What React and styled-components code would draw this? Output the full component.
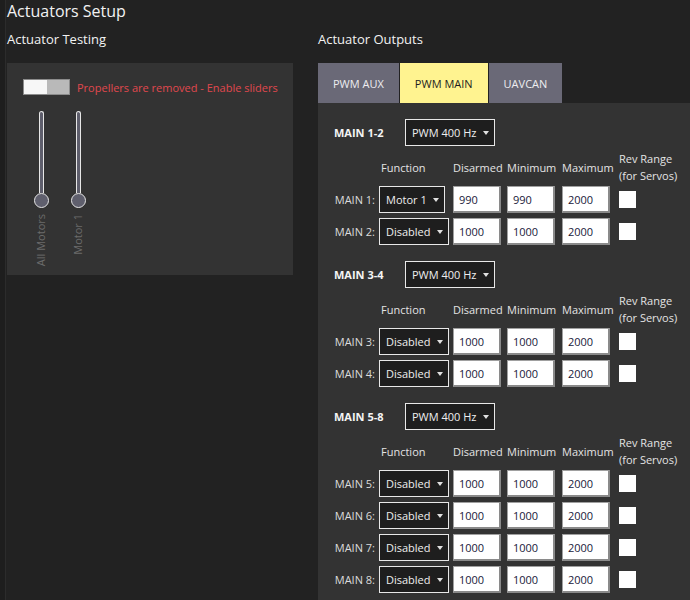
import styled, { createGlobalStyle } from "styled-components";

const GlobalStyle = createGlobalStyle`
  html, body {
    margin: 0;
    padding: 0;
    background: #222222;
    overflow: hidden;
  }
  body {
    font-family: "Open Sans", "Liberation Sans", sans-serif;
    font-size: 11px;
    color: #eeeeee;
  }
`;

const Root = styled.div`
  display: flex;
  width: 690px;
  height: 600px;
  background: #222222;
  overflow: hidden;
`;

const EdgeStrip = styled.div`
  width: 5px;
  flex: none;
  background: #1e1e1e;
  border-right: 1px solid #2c2c2c;
`;

const Main = styled.div`
  flex: 1;
  padding-left: 1px;
  display: flex;
  flex-direction: column;
`;

const Title = styled.h1`
  margin: 0;
  font-size: 16px;
  font-weight: 400;
  line-height: 22px;
  color: #f2f2f2;
`;

const Columns = styled.div`
  display: flex;
  gap: 25px;
  margin-top: 6px;
`;

const LeftCol = styled.div`
  width: 286px;
  flex: none;
`;

const RightCol = styled.div`
  flex: 1;
  display: flex;
  flex-direction: column;
`;

const SectionTitle = styled.h2`
  margin: 0;
  font-size: 13px;
  font-weight: 400;
  line-height: 22px;
  height: 35px;
  color: #f2f2f2;
`;

const TestPanel = styled.div`
  background: #333333;
  height: 212px;
  box-sizing: border-box;
  padding: 16px 16px 10px;
`;

const ToggleRow = styled.div`
  display: flex;
  align-items: center;
  gap: 7px;
  height: 16px;
`;

const Toggle = styled.div`
  width: 47px;
  height: 16px;
  flex: none;
  box-sizing: border-box;
  border: 1px solid #8c8c8c;
  display: flex;
`;

const ToggleHalf = styled.div`
  flex: 1;
  background: ${(p) => (p.$on ? "#f7f7f7" : "#b9b9b9")};
`;

const Warning = styled.span`
  color: #e0484e;
  font-size: 11px;
  white-space: nowrap;
`;

const Sliders = styled.div`
  display: flex;
  gap: 1px;
  margin-top: 16px;
`;

const SliderCol = styled.div`
  width: 36px;
  display: flex;
  flex-direction: column;
  align-items: center;
`;

const Track = styled.div`
  width: 5px;
  height: 82px;
  box-sizing: border-box;
  border: 1px solid #e6e6e6;
  border-bottom: none;
  border-radius: 3px 3px 0 0;
  background: #5e5e6c;
`;

const Knob = styled.div`
  width: 15px;
  height: 15px;
  box-sizing: border-box;
  border-radius: 50%;
  border: 1.5px solid #e6e6e6;
  background: #5f5f6d;
`;

const SliderLabel = styled.div`
  margin-top: 6px;
  writing-mode: vertical-rl;
  transform: rotate(180deg);
  color: #6b6b6b;
  font-size: 11px;
  line-height: 14px;
  text-align: right;
`;

const Tabs = styled.div`
  display: flex;
  gap: 1px;
  height: 40px;
`;

const Tab = styled.div`
  display: flex;
  align-items: center;
  padding: 0 15px;
  background: ${(p) => (p.$active ? "#fff390" : "#6a6977")};
  color: ${(p) => (p.$active ? "#1e1e1e" : "#ededf0")};
  font-size: 11px;
`;

const OutputsPanel = styled.div`
  background: #333333;
  flex: 1;
  padding: 16px 0 0 16px;
`;

const Group = styled.div`
  display: flex;
  flex-direction: column;
  margin-bottom: 16px;
`;

const GroupHead = styled.div`
  display: flex;
  align-items: center;
  height: 27px;
  margin-bottom: 4px;
`;

const GroupName = styled.div`
  width: 71px;
  font-weight: 700;
  color: #f4f4f4;
`;

const Select = styled.div`
  display: inline-flex;
  align-items: center;
  height: 27px;
  box-sizing: border-box;
  padding: 0 5px 0 6px;
  gap: 6px;
  background: #1e1e1e;
  border: 1px solid #e8e8e8;
  color: #eeeeee;
  white-space: nowrap;
  justify-self: start;
`;

const Caret = styled.span`
  width: 0;
  height: 0;
  border-left: 3.5px solid transparent;
  border-right: 3.5px solid transparent;
  border-top: 4px solid #e0e0e0;
`;

const Grid = styled.div`
  display: grid;
  grid-template-columns: 41px 70px 50px 51px 53px auto;
  column-gap: 4px;
  align-items: center;
`;

const HeaderRow = styled(Grid)`
  height: 34px;
  margin-bottom: 2px;
  color: #e4e4e4;
  line-height: 17px;
`;

const HeadCell = styled.div`
  padding-left: ${(p) => (p.$indent ? "2px" : "0")};
  white-space: nowrap;
`;

const OutputRow = styled(Grid)`
  height: 27px;
  & + & {
    margin-top: 5px;
  }
`;

const RowLabel = styled.div`
  text-align: right;
  color: #dcdcdc;
  white-space: nowrap;
`;

const Input = styled.div`
  width: 48px;
  height: 27px;
  box-sizing: border-box;
  border: 1px solid #a0a0a0;
  border-right-width: 2px;
  border-bottom-width: 2px;
  border-right-color: #8a8a8a;
  border-bottom-color: #8a8a8a;
  background: #ffffff;
  color: #20203a;
  padding-left: 5px;
  display: flex;
  align-items: center;
`;

const Check = styled.div`
  width: 17px;
  height: 17px;
  background: #ffffff;
`;

const groups = [
  {
    name: "MAIN 1-2",
    rows: [
      { n: 1, fn: "Motor 1", v: ["990", "990", "2000"] },
      { n: 2, fn: "Disabled", v: ["1000", "1000", "2000"] },
    ],
  },
  {
    name: "MAIN 3-4",
    rows: [
      { n: 3, fn: "Disabled", v: ["1000", "1000", "2000"] },
      { n: 4, fn: "Disabled", v: ["1000", "1000", "2000"] },
    ],
  },
  {
    name: "MAIN 5-8",
    rows: [
      { n: 5, fn: "Disabled", v: ["1000", "1000", "2000"] },
      { n: 6, fn: "Disabled", v: ["1000", "1000", "2000"] },
      { n: 7, fn: "Disabled", v: ["1000", "1000", "2000"] },
      { n: 8, fn: "Disabled", v: ["1000", "1000", "2000"] },
    ],
  },
];

function Slider({ label }) {
  return (
    <SliderCol>
      <Track />
      <Knob />
      <SliderLabel>{label}</SliderLabel>
    </SliderCol>
  );
}

function OutputGroup({ group }) {
  return (
    <Group>
      <GroupHead>
        <GroupName>{group.name}</GroupName>
        <Select>
          PWM 400 Hz <Caret />
        </Select>
      </GroupHead>
      <HeaderRow>
        <span />
        <HeadCell $indent>Function</HeadCell>
        <HeadCell>Disarmed</HeadCell>
        <HeadCell>Minimum</HeadCell>
        <HeadCell>Maximum</HeadCell>
        <HeadCell>
          Rev Range
          <br />
          (for Servos)
        </HeadCell>
      </HeaderRow>
      {group.rows.map((r) => (
        <OutputRow key={r.n}>
          <RowLabel>MAIN {r.n}:</RowLabel>
          <Select>
            {r.fn} <Caret />
          </Select>
          <Input>{r.v[0]}</Input>
          <Input>{r.v[1]}</Input>
          <Input>{r.v[2]}</Input>
          <Check />
        </OutputRow>
      ))}
    </Group>
  );
}

export default function App() {
  return (
    <Root>
      <GlobalStyle />
      <EdgeStrip />
      <Main>
        <Title>Actuators Setup</Title>
        <Columns>
          <LeftCol>
            <SectionTitle>Actuator Testing</SectionTitle>
            <TestPanel>
              <ToggleRow>
                <Toggle>
                  <ToggleHalf $on />
                  <ToggleHalf />
                </Toggle>
                <Warning>Propellers are removed - Enable sliders</Warning>
              </ToggleRow>
              <Sliders>
                <Slider label="All Motors" />
                <Slider label="Motor 1" />
              </Sliders>
            </TestPanel>
          </LeftCol>
          <RightCol>
            <SectionTitle>Actuator Outputs</SectionTitle>
            <Tabs>
              <Tab>PWM AUX</Tab>
              <Tab $active>PWM MAIN</Tab>
              <Tab>UAVCAN</Tab>
            </Tabs>
            <OutputsPanel>
              {groups.map((g) => (
                <OutputGroup key={g.name} group={g} />
              ))}
            </OutputsPanel>
          </RightCol>
        </Columns>
      </Main>
    </Root>
  );
}
